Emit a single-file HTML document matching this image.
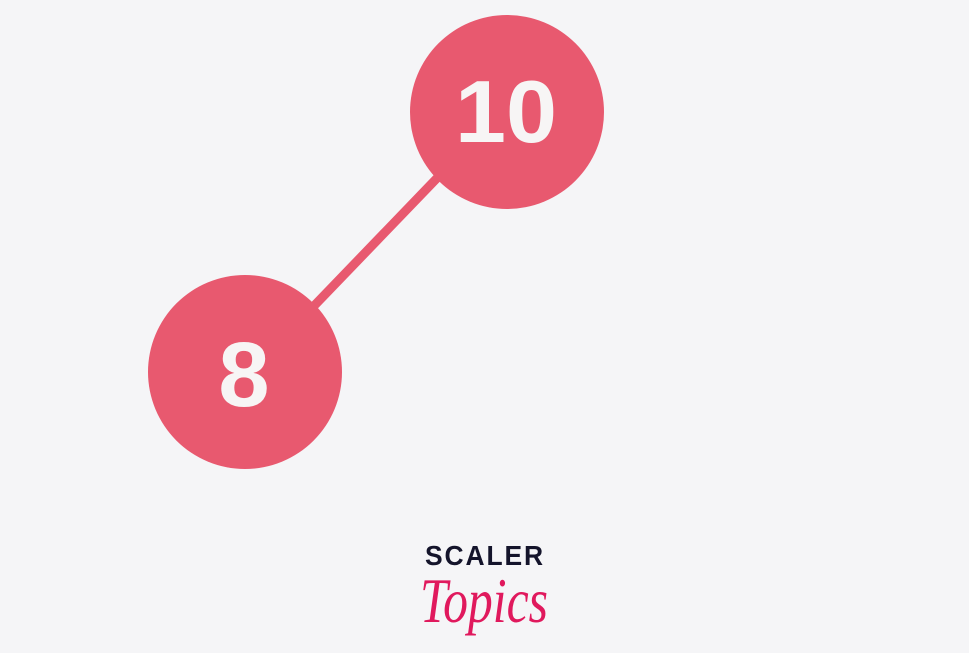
<!DOCTYPE html>
<html><head><style>
html,body{margin:0;padding:0;background:#f5f5f7;width:969px;height:653px;overflow:hidden}
</style></head><body>
<svg width="969" height="653" viewBox="0 0 969 653" xmlns="http://www.w3.org/2000/svg">
<rect width="969" height="653" fill="#f5f5f7"/>
<line x1="440" y1="175" x2="312" y2="308" stroke="#e8596f" stroke-width="9"/>
<circle cx="507" cy="112" r="97" fill="#e8596f"/>
<circle cx="245" cy="372" r="97" fill="#e8596f"/>
<text x="506" y="142" text-anchor="middle" font-family="Liberation Sans, sans-serif" font-weight="bold" font-size="88" fill="#f7f5f5" textLength="102" lengthAdjust="spacingAndGlyphs">10</text>
<text x="244" y="406" text-anchor="middle" font-family="Liberation Sans, sans-serif" font-weight="bold" font-size="92" fill="#f7f5f5">8</text>
<text x="485" y="565" text-anchor="middle" font-family="Liberation Sans, sans-serif" font-weight="bold" font-size="28" letter-spacing="2" fill="#14142b" textLength="120" lengthAdjust="spacingAndGlyphs">SCALER</text>
<text x="484" y="622" text-anchor="middle" font-family="Liberation Serif, serif" font-style="italic" font-size="64" fill="#e0195d" textLength="128" lengthAdjust="spacingAndGlyphs">Topics</text>
</svg>
</body></html>
